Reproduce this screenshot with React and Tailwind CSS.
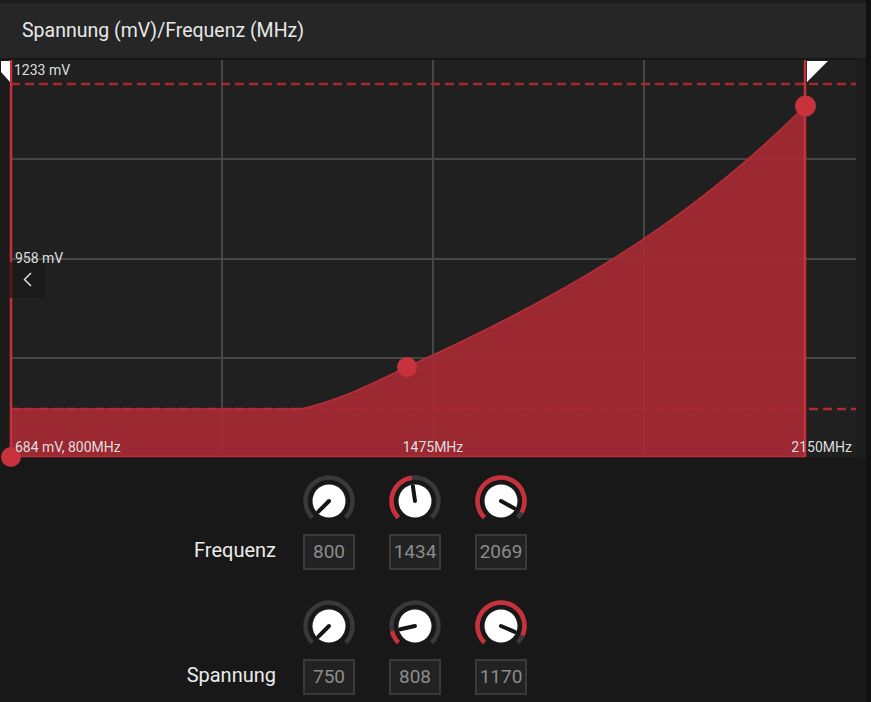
import React from 'react';

const FONT = { fontFamily: 'Roboto, "Open Sans", sans-serif' };

const freq = [
    { value: 800, t: 0 },
    { value: 1434, t: 0.47 },
    { value: 2069, t: 0.94 },
];
const volt = [
    { value: 750, t: 0 },
    { value: 808, t: 0.12 },
    { value: 1170, t: 0.92 },
];

function polar(cx, cy, r, deg) {
    const a = (deg * Math.PI) / 180;
    return [cx + r * Math.sin(a), cy - r * Math.cos(a)];
}

function arc(cx, cy, r, from, to) {
    const [x1, y1] = polar(cx, cy, r, from);
    const [x2, y2] = polar(cx, cy, r, to);
    const large = to - from > 180 ? 1 : 0;
    return `M${x1},${y1} A${r},${r} 0 ${large} 1 ${x2},${y2}`;
}

function Knob({ t }) {
    const angle = -135 + t * 270;
    const [px, py] = polar(28, 28, 15, angle);
    return (
        <svg width="56" height="56" viewBox="0 0 56 56" className="shrink-0">
            <path d={arc(28, 28, 23.5, -135, 135)} fill="none" stroke="#393939" strokeWidth="4.5" />
            {t > 0 && (
                <path d={arc(28, 28, 23.5, -135, angle)} fill="none" stroke="#c8313b" strokeWidth="4.5" />
            )}
            <circle cx="28" cy="28" r="16.5" fill="#ffffff" />
            <line x1="28" y1="28" x2={px} y2={py} stroke="#151515" strokeWidth="4" strokeLinecap="round" />
        </svg>
    );
}

function ControlRow({ label, items, className = '' }) {
    return (
        <div className={`flex flex-col ${className}`}>
            <div className="flex pl-[301px] gap-[30px]">
                {items.map((it) => (
                    <Knob key={it.value} t={it.t} />
                ))}
            </div>
            <div className="flex items-center mt-[5px]">
                <div className="w-[276px] text-right text-[20px] text-[#ececec] -translate-y-[2px]" style={FONT}>
                    {label}
                </div>
                <div className="flex ml-[27px] gap-[34px]">
                    {items.map((it) => (
                        <div
                            key={it.value}
                            className="w-[52px] h-[36px] border-2 border-[#3a3a3a] bg-[#222222] flex items-center justify-center text-[19px] text-[#8c8c8c]"
                            style={FONT}
                        >
                            {it.value}
                        </div>
                    ))}
                </div>
            </div>
        </div>
    );
}

function Chart() {
    const curve = 'M11,349 L300,349 C340,341 375,322 407,307 C557,239.5 685,166 805,46';
    return (
        <div className="relative w-[856px] h-[398px]">
            <svg width="856" height="398" viewBox="0 0 856 398" className="overflow-visible" style={FONT}>
                <rect x="0" y="0" width="11" height="398" fill="#1b1b1b" />
                <rect x="11" y="0" width="845" height="397" fill="#202020" />
                {[222, 433, 644].map((x) => (
                    <line key={x} x1={x} y1="0" x2={x} y2="397" stroke="#464646" strokeWidth="2" />
                ))}
                {[99, 199, 298].map((y) => (
                    <line key={y} x1="11" y1={y} x2="856" y2={y} stroke="#464646" strokeWidth="2" />
                ))}
                <line x1="11" y1="24" x2="856" y2="24" stroke="#a8262f" strokeWidth="2.5" strokeDasharray="9 5" />
                <line x1="11" y1="349" x2="856" y2="349" stroke="#b02a34" strokeWidth="2.5" strokeDasharray="9 5" />
                <path d={`${curve} L805,397 L11,397 Z`} fill="#a72a34" fillOpacity="0.92" />
                <path d={curve} fill="none" stroke="#b82f39" strokeWidth="1.5" />
                <line x1="11" y1="396.5" x2="805" y2="396.5" stroke="#b82f39" strokeWidth="1.5" />
                <line x1="11" y1="0" x2="11" y2="397" stroke="#c5303a" strokeWidth="2.5" />
                <line x1="805" y1="0" x2="805" y2="397" stroke="#c5303a" strokeWidth="2.5" />
                <polygon points="1,1 10,1 10,22 1,12" fill="#ffffff" />
                <polygon points="807,1 828,1 807,22" fill="#ffffff" />
                <circle cx="11" cy="397" r="10" fill="#c8323c" />
                <circle cx="407" cy="307" r="10" fill="#c8323c" />
                <circle cx="805.5" cy="46" r="10.5" fill="#c8323c" />
                <rect x="10" y="202" width="35" height="36" fill="#000000" fillOpacity="0.18" />
                <rect x="9.5" y="202" width="3" height="36" fill="#000000" fillOpacity="0.4" />
                <path d="M31,213 L24.5,219.5 L31,226" fill="none" stroke="#dcdcdc" strokeWidth="1.5" />
                <text x="14" y="15" fontSize="14" fill="#dedede">1233 mV</text>
                <text x="15" y="203" fontSize="14" fill="#dedede">958 mV</text>
                <text x="15" y="392" fontSize="14" fill="#dedede">684 mV, 800MHz</text>
                <text x="433" y="392" fontSize="14" fill="#dedede" textAnchor="middle">1475MHz</text>
                <text x="852" y="392" fontSize="14" fill="#dedede" textAnchor="end">2150MHz</text>
            </svg>
        </div>
    );
}

export default function App() {
    return (
        <div className="w-[871px] h-[702px] bg-[#181818] flex overflow-hidden">
            <div className="w-[866px] flex flex-col">
                <div className="h-[3px] bg-[#1c1c1c]" />
                <div className="h-[55px] bg-[#262626] flex items-center pl-[22px]">
                    <h1 className="text-[19.5px] text-[#e8e8e8]" style={FONT}>
                        Spannung (mV)/Frequenz (MHz)
                    </h1>
                </div>
                <div className="h-[2px]" />
                <div className="flex">
                    <Chart />
                    <div className="w-[10px] bg-[#1c1c1c]" />
                </div>
                <ControlRow label="Frequenz" items={freq} className="mt-[15px]" />
                <ControlRow label="Spannung" items={volt} className="mt-[28px]" />
            </div>
            <div className="w-[5px] bg-[#111111]" />
        </div>
    );
}
